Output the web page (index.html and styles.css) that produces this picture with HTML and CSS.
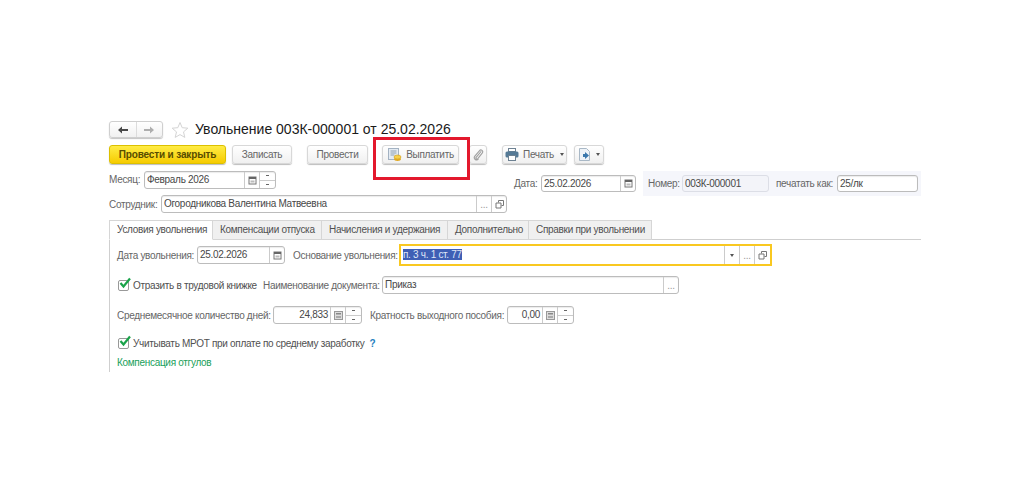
FILE: index.html
```html
<!DOCTYPE html>
<html lang="ru">
<head>
    <meta charset="UTF-8">
    <title>Увольнение</title>
    <link rel="stylesheet" href="styles.css">
</head>
<body>
    <div class="doc">
        <div class="title-row">
            <div class="nav-group">
                <div class="nav-btn nav-back">
                    <svg width="14" height="10" viewBox="0 0 14 10"><path d="M2 5l4-3.500V4h6v2H6v2.500z" fill="#484848"/></svg>
                </div>
                <div class="nav-btn nav-next">
                    <svg width="14" height="10" viewBox="0 0 14 10"><path d="M12 5L8 1.500V4H2v2h6v2.500z" fill="#aeaeae"/></svg>
                </div>
            </div>
            <svg class="star" width="18" height="18" viewBox="0 0 18 18"><path d="M9 1.500l2.200 5.200 5.600.5-4.300 3.700 1.300 5.500L9 13.600l-4.800 2.800 1.300-5.500L1.200 7.200l5.600-.5z" fill="#fff" stroke="#d4d4d4"/></svg>
            <h1>Увольнение 003К-000001 от 25.02.2026</h1>
        </div>

        <div class="toolbar">
            <button class="btn btn-primary">Провести и закрыть</button>
            <button class="btn btn-save">Записать</button>
            <button class="btn btn-post">Провести</button>
            <button class="btn btn-pay">
                <svg width="15" height="15" viewBox="0 0 15 15"><rect x="1.500" y="1.500" width="10" height="11" fill="#e4ebf3" stroke="#a3b2c2"/><path d="M3.500 4h6M3.500 6h6M3.500 8h4" stroke="#8ea0b2"/><ellipse cx="10.500" cy="10" rx="3.500" ry="2" fill="#f6d04a" stroke="#cf9a1c" stroke-width=".6"/><path d="M7 10.500v1.500c0 1 1.500 2 3.500 2s3.500-1 3.500-2v-1.500c0 1-1.500 1.500-3.500 1.500S7 11.500 7 10.500z" fill="#e0a820"/></svg>
                Выплатить
            </button>
            <button class="btn btn-clip">
                <svg width="12" height="13" viewBox="0 0 12 14"><path d="M9.500 3.500L4 10c-1 1.300.7 2.600 1.800 1.400l4.700-5.900c1.800-2.300-1.300-4.600-3-2.500L2.600 8.800c-2 2.700 1.700 5.700 3.900 3" fill="none" stroke="#a0a0a0" stroke-width="1.200"/></svg>
            </button>
            <button class="btn btn-print">
                <svg width="14" height="13" viewBox="0 0 14 13"><rect x="3.500" y=".5" width="7" height="3" fill="#fff" stroke="#6d8192"/><rect x=".5" y="3.500" width="13" height="6" rx="1.500" fill="#557a96"/><rect x="3.500" y="7.500" width="7" height="5" fill="#fff" stroke="#6d8192"/></svg>
                Печать
                <span class="caret caret-print"></span>
            </button>
            <button class="btn btn-more">
                <svg width="14" height="14" viewBox="0 0 14 14"><path d="M1.500.5h7l3 3v9h-10z" fill="#eef3f8" stroke="#a9b8c6"/><path d="M5 6h2V4l4 3.500L7 11V9H5z" fill="#3a78ad"/></svg>
                <span class="caret"></span>
            </button>
        </div>

        <div class="head-row">
            <label class="lbl lbl-month">Месяц:</label>
            <div class="field field-month">
                <span class="val">Февраль 2026</span>
                <span class="cell cell-icon"><svg width="9" height="9" viewBox="0 0 9 9"><use href="#cal"/></svg></span>
                <span class="cell spin"><i class="up"></i><i class="down"></i></span>
            </div>
            <label class="lbl lbl-date">Дата:</label>
            <div class="field field-date">
                <span class="val">25.02.2026</span>
                <span class="cell cell-icon"><svg width="9" height="9" viewBox="0 0 9 9"><use href="#cal"/></svg></span>
            </div>
            <div class="number-panel">
                <label class="lbl lbl-number">Номер:</label>
                <div class="field field-number"><span class="val">003К-000001</span></div>
                <label class="lbl lbl-print">печатать как:</label>
                <div class="field field-print"><span class="val">25/лк</span></div>
            </div>
        </div>

        <div class="employee-row">
            <label class="lbl lbl-employee">Сотрудник:</label>
            <div class="field field-employee">
                <span class="val">Огородникова Валентина Матвеевна</span>
                <span class="cell cell-dots">...</span>
                <span class="cell cell-open"><svg width="9" height="9" viewBox="0 0 9 9"><use href="#open"/></svg></span>
            </div>
        </div>

        <div class="tabs">
            <div class="tab tab-active">Условия увольнения</div>
            <div class="tab tab-vacation">Компенсации отпуска</div>
            <div class="tab tab-accruals">Начисления и удержания</div>
            <div class="tab tab-extra">Дополнительно</div>
            <div class="tab tab-certs">Справки при увольнении</div>
        </div>

        <div class="tab-body">
            <div class="row row-dismissal">
                <label class="lbl lbl-dismissal">Дата увольнения:</label>
                <div class="field field-dismissal">
                    <span class="val">25.02.2026</span>
                    <span class="cell cell-icon"><svg width="9" height="9" viewBox="0 0 9 9"><use href="#cal"/></svg></span>
                </div>
                <label class="lbl lbl-reason">Основание увольнения:</label>
                <div class="field field-reason">
                    <span class="val"><span class="selected">п. 3 ч. 1 ст. 77</span></span>
                    <span class="cell cell-drop"><span class="caret"></span></span>
                    <span class="cell cell-dots">...</span>
                    <span class="cell cell-open"><svg width="9" height="9" viewBox="0 0 9 9"><use href="#open"/></svg></span>
                </div>
            </div>

            <div class="row row-book">
                <span class="check"><svg width="13" height="13" viewBox="0 0 13 13"><use href="#tick"/></svg></span>
                <span class="check-text check-book">Отразить в трудовой книжке</span>
                <label class="lbl lbl-docname">Наименование документа:</label>
                <div class="field field-docname">
                    <span class="val">Приказ</span>
                    <span class="cell cell-dots">...</span>
                </div>
            </div>

            <div class="row row-days">
                <label class="lbl lbl-days">Среднемесячное количество дней:</label>
                <div class="field field-days">
                    <span class="val val-num">24,833</span>
                    <span class="cell cell-icon"><svg width="9" height="9" viewBox="0 0 9 9"><use href="#calc"/></svg></span>
                    <span class="cell spin"><i class="up"></i><i class="down"></i></span>
                </div>
                <label class="lbl lbl-ratio">Кратность выходного пособия:</label>
                <div class="field field-ratio">
                    <span class="val val-num">0,00</span>
                    <span class="cell cell-icon"><svg width="9" height="9" viewBox="0 0 9 9"><use href="#calc"/></svg></span>
                    <span class="cell spin"><i class="up"></i><i class="down"></i></span>
                </div>
            </div>

            <div class="row row-mrot">
                <span class="check"><svg width="13" height="13" viewBox="0 0 13 13"><use href="#tick"/></svg></span>
                <span class="check-text">Учитывать МРОТ при оплате по среднему заработку</span>
                <span class="help">?</span>
            </div>

            <div class="section-link">Компенсация отгулов</div>
        </div>

        <div class="callout"></div>
    </div>

    <svg class="defs" width="0" height="0">
        <symbol id="cal" viewBox="0 0 9 9"><rect x="1" y="1" width="7" height="7" fill="#fff" stroke="#777"/><rect x="1" y="1" width="7" height="2" fill="#666"/><rect x="2.500" y="4.500" width="4" height="2" fill="#bbb"/></symbol>
        <symbol id="calc" viewBox="0 0 9 9"><rect x=".5" y=".5" width="8" height="8" fill="#ddd" stroke="#999"/><rect x="2" y="2" width="5" height="1.500" fill="#888"/><rect x="2" y="5" width="5" height="2" fill="#aaa"/></symbol>
        <symbol id="open" viewBox="0 0 9 9"><path d="M3.500 2.500V.5h5v5h-2M1 3h5v5H1z" fill="#fff" stroke="#777"/></symbol>
        <symbol id="tick" viewBox="0 0 13 13"><path d="M2.500 6l3 3.500L12 1.500" fill="none" stroke="#1aa34a" stroke-width="2.200"/></symbol>
    </svg>
</body>
</html>
```

FILE: styles.css
```css
* {
    margin: 0;
    padding: 0;
    box-sizing: border-box;
}

body {
    background: #fff;
    font-family: "Liberation Sans", Arial, sans-serif;
    font-size: 10px;
    letter-spacing: -0.3px;
    color: #505050;
    overflow: hidden;
}

.doc {
    position: relative;
    width: 1024px;
    height: 486px;
    padding: 121px 0 0 109px;
}

.defs {
    position: absolute;
}

/* title */
.title-row {
    display: flex;
    align-items: center;
    height: 17px;
}

.nav-group {
    display: flex;
    width: 54px;
    height: 17px;
    border: 1px solid #cfcfcf;
    border-radius: 3px;
    background: linear-gradient(to bottom, #fff, #f1f1f1);
    box-shadow: 0 1px 1px #c4c4c4;
}

.nav-btn {
    flex: 1;
    display: flex;
    align-items: center;
    justify-content: center;
}

.nav-back {
    border-right: 1px solid #dcdcdc;
}

.star {
    margin: 0 6px 0 8px;
}

h1 {
    margin-top: -2px;
    font-size: 14px;
    font-weight: normal;
    letter-spacing: 0;
    color: #1a1a1a;
    white-space: nowrap;
}

/* toolbar */
.toolbar {
    display: flex;
    margin-top: 7px;
    height: 19px;
}

.btn {
    display: flex;
    align-items: center;
    justify-content: center;
    gap: 4px;
    height: 19px;
    font: inherit;
    letter-spacing: inherit;
    color: #666;
    border: 1px solid #d8d8d8;
    border-radius: 3px;
    background: linear-gradient(to bottom, #fff, #f0f0f0);
    box-shadow: 0 1px 1px #bdbdbd;
}

.btn-primary {
    width: 117px;
    font-weight: bold;
    letter-spacing: -0.15px;
    color: #574c00;
    border-color: #dcc000;
    background: linear-gradient(to bottom, #ffec45, #f6cb00);
}

.btn-save {
    width: 60px;
    margin-left: 6px;
}

.btn-post {
    width: 61px;
    margin-left: 15px;
}

.btn-pay {
    width: 77px;
    margin-left: 14px;
}

.btn-clip {
    width: 18px;
    margin-left: 10px;
}

.btn-print {
    width: 65px;
    margin-left: 15px;
}

.btn-more {
    width: 30px;
    margin-left: 7px;
}

.caret {
    width: 0;
    height: 0;
    border: 2.500px solid transparent;
    border-top: 3px solid #555;
    border-bottom: 0;
}

.caret-print {
    margin-left: 2px;
}

/* labels and fields */
.lbl {
    flex: none;
    white-space: nowrap;
    color: #666;
}

.field {
    display: flex;
    align-items: stretch;
    height: 18px;
    background: #fff;
    border: 1px solid #bcbcbc;
    border-radius: 3px;
    box-shadow: inset 0 1px 1px #ececec;
}

.val {
    flex: 1;
    min-width: 0;
    padding-left: 2px;
    line-height: 16px;
    color: #484848;
    white-space: nowrap;
}

.val-num {
    padding: 0 2px 0 0;
    text-align: right;
}

.cell {
    display: flex;
    align-items: center;
    justify-content: center;
    border-left: 1px solid #cbcbcb;
}

.cell-icon,
.cell-dots,
.cell-open,
.cell-drop {
    width: 15px;
}

.cell-dots {
    color: #999;
}

.spin {
    width: 16px;
    flex-direction: column;
}

.spin i {
    flex: 1;
    align-self: stretch;
    display: flex;
    align-items: center;
    justify-content: center;
}

.spin .up {
    border-bottom: 1px solid #cbcbcb;
}

.spin .up::after,
.spin .down::after {
    content: "";
    width: 3px;
    height: 1px;
    background: #666;
}

/* header rows */
.head-row {
    display: flex;
    align-items: flex-start;
    height: 25px;
    margin-top: 7px;
}

.lbl-month {
    width: 35px;
    line-height: 18px;
}

.field-month {
    width: 132px;
}

.lbl-date {
    width: 27px;
    margin: 4px 0 0 238px;
    line-height: 17px;
}

.field-date {
    width: 95px;
    height: 17px;
    margin-top: 4px;
}

.number-panel {
    display: flex;
    align-items: center;
    width: 278px;
    height: 25px;
    margin-left: 7px;
    padding-left: 5px;
    background: #f5f6fb;
}

.lbl-number {
    width: 34px;
}

.field-number {
    width: 87px;
    height: 17px;
    background: #f3f4f9;
    border-color: #dcdee6;
    box-shadow: none;
}

.lbl-print {
    width: 61px;
    margin-left: 7px;
}

.field-print {
    width: 81px;
    height: 17px;
}

.employee-row {
    display: flex;
    align-items: center;
    margin-top: -1px;
    height: 18px;
}

.lbl-employee {
    width: 52px;
}

.field-employee {
    width: 346px;
}

/* tabs */
.tabs {
    display: flex;
    height: 20px;
    width: 812px;
    margin-top: 7px;
    border-bottom: 1px solid #cfcfcf;
}

.tab {
    height: 20px;
    padding-left: 7px;
    line-height: 18px;
    white-space: nowrap;
    background: #f0f0f0;
    border: 1px solid #d6d6d6;
    border-left: 0;
    color: #505050;
}

.tab-active {
    width: 104px;
    background: #fff;
    border-bottom-color: #fff;
    border-left: 1px solid #d6d6d6;
}

.tab-vacation {
    width: 109px;
}

.tab-accruals {
    width: 126px;
}

.tab-extra {
    width: 81px;
}

.tab-certs {
    width: 123px;
}

/* tab page */
.tab-body {
    width: 812px;
    height: 132px;
    border-left: 1px solid #cfcfcf;
    padding: 6px 0 0 7px;
}

.row {
    display: flex;
    align-items: center;
    height: 18px;
}

.lbl-dismissal {
    width: 80px;
}

.field-dismissal {
    width: 88px;
}

.lbl-reason {
    width: 106px;
    margin-left: 8px;
}

.field-reason {
    width: 373px;
    height: 22px;
    border: 2px solid #f9c820;
    border-radius: 0;
    box-shadow: none;
}

.field-reason .val {
    line-height: 18px;
}

.field-reason .cell-open {
    width: 16px;
}

.selected {
    background: #3f5fb5;
    color: #dfe6f7;
}

.check {
    flex: none;
    display: flex;
    align-items: center;
    justify-content: center;
    width: 11px;
    height: 11px;
    margin-left: 1px;
    border: 1px solid #999;
    border-radius: 2px;
    background: #fff;
}

.check svg {
    flex: none;
    margin: -3px 0 0 1px;
}

.check-text {
    margin-left: 4px;
    white-space: nowrap;
}

.check-book {
    width: 130px;
}

.row-book {
    margin-top: 12px;
}

.lbl-docname {
    width: 119px;
}

.field-docname {
    width: 297px;
}

.row-days {
    margin-top: 12px;
}

.lbl-days {
    width: 156px;
}

.field-days {
    width: 89px;
}

.lbl-ratio {
    width: 137px;
    margin-left: 8px;
}

.field-ratio {
    width: 67px;
}

.row-mrot {
    margin-top: 10px;
}

.help {
    margin-left: 5px;
    font-weight: bold;
    color: #1f7fc0;
}

.section-link {
    margin-top: 5px;
    color: #19a05a;
}

/* red callout over the toolbar */
.callout {
    position: absolute;
    left: 373px;
    top: 137px;
    width: 97px;
    height: 43px;
    border: 3px solid #e3182d;
}
```
